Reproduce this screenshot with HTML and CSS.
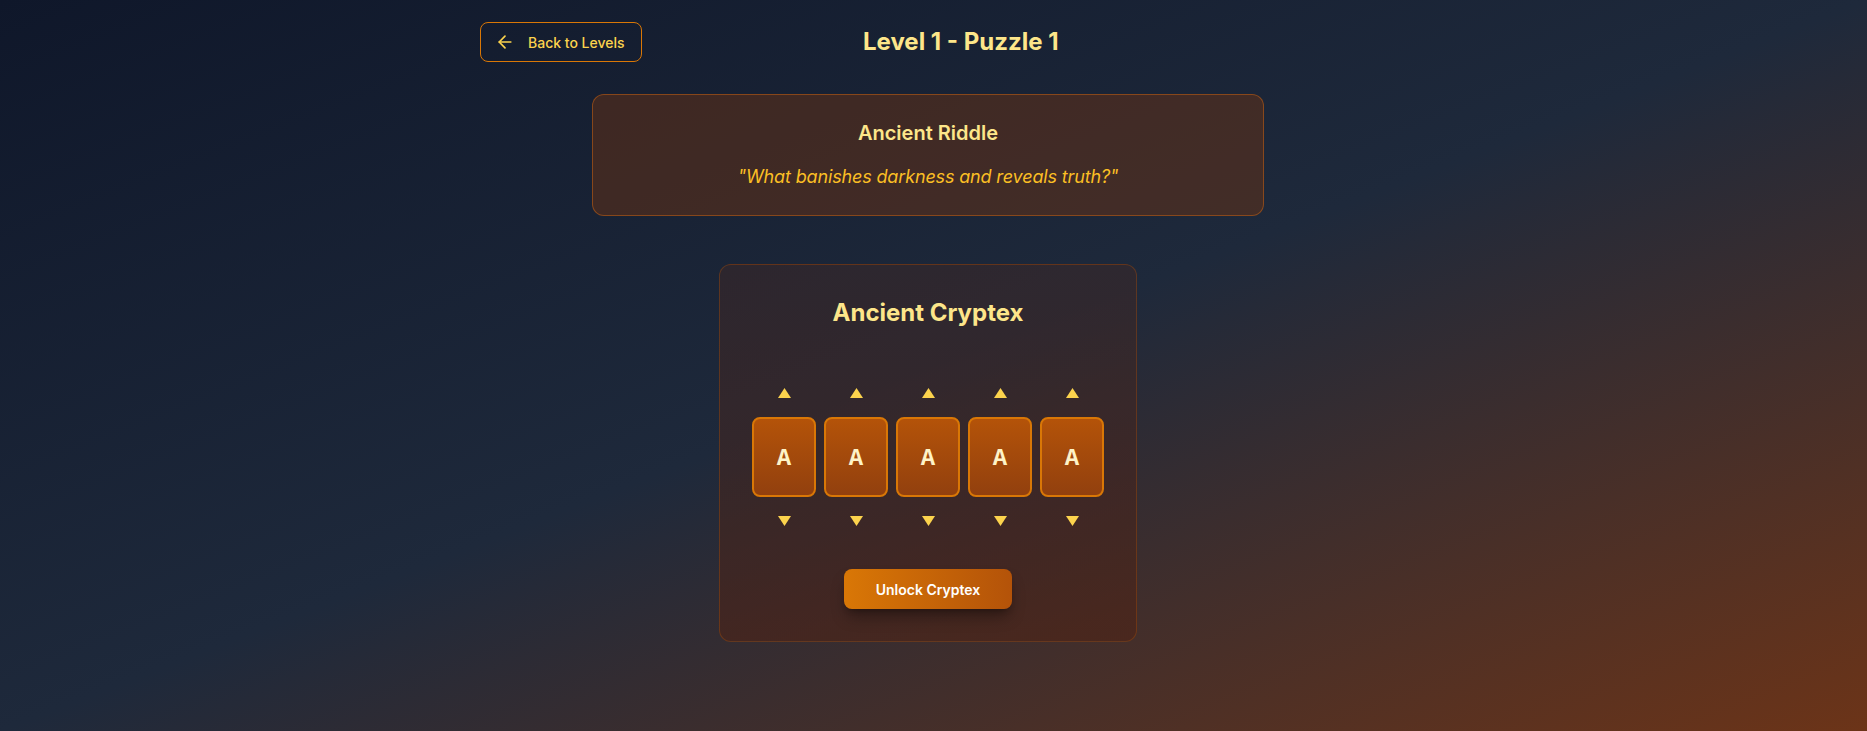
FILE: index.html
```html
<!DOCTYPE html>
<html lang="en">
<head>
<meta charset="utf-8">
<title>Level 1 - Puzzle 1</title>
<link rel="stylesheet" href="styles.css">
</head>
<body>
<div class="page">
  <header class="header">
    <button class="back-btn">
      <svg class="back-icon" viewBox="0 0 24 24" width="20" height="20" fill="none" stroke="currentColor" stroke-width="2" stroke-linecap="round" stroke-linejoin="round"><path d="m12 19-7-7 7-7"/><path d="M19 12H5"/></svg>
      <span>Back to Levels</span>
    </button>
    <h1 class="title">Level 1 - Puzzle 1</h1>
    <div class="spacer"></div>
  </header>

  <section class="riddle">
    <h2 class="riddle-title">Ancient Riddle</h2>
    <p class="riddle-text">"What banishes darkness and reveals truth?"</p>
  </section>

  <section class="cryptex">
    <h2 class="cryptex-title">Ancient Cryptex</h2>
    <div class="dials">
      <div class="dial">
        <button class="arrow"><svg viewBox="0 0 13 10" width="13" height="10"><polygon points="6.5,0 13,10 0,10"/></svg></button>
        <div class="letter">A</div>
        <button class="arrow"><svg viewBox="0 0 13 10" width="13" height="10"><polygon points="0,0 13,0 6.5,10"/></svg></button>
      </div>
      <div class="dial">
        <button class="arrow"><svg viewBox="0 0 13 10" width="13" height="10"><polygon points="6.5,0 13,10 0,10"/></svg></button>
        <div class="letter">A</div>
        <button class="arrow"><svg viewBox="0 0 13 10" width="13" height="10"><polygon points="0,0 13,0 6.5,10"/></svg></button>
      </div>
      <div class="dial">
        <button class="arrow"><svg viewBox="0 0 13 10" width="13" height="10"><polygon points="6.5,0 13,10 0,10"/></svg></button>
        <div class="letter">A</div>
        <button class="arrow"><svg viewBox="0 0 13 10" width="13" height="10"><polygon points="0,0 13,0 6.5,10"/></svg></button>
      </div>
      <div class="dial">
        <button class="arrow"><svg viewBox="0 0 13 10" width="13" height="10"><polygon points="6.5,0 13,10 0,10"/></svg></button>
        <div class="letter">A</div>
        <button class="arrow"><svg viewBox="0 0 13 10" width="13" height="10"><polygon points="0,0 13,0 6.5,10"/></svg></button>
      </div>
      <div class="dial">
        <button class="arrow"><svg viewBox="0 0 13 10" width="13" height="10"><polygon points="6.5,0 13,10 0,10"/></svg></button>
        <div class="letter">A</div>
        <button class="arrow"><svg viewBox="0 0 13 10" width="13" height="10"><polygon points="0,0 13,0 6.5,10"/></svg></button>
      </div>
    </div>
    <div class="unlock-row">
      <button class="unlock">Unlock Cryptex</button>
    </div>
  </section>
</div>
</body>
</html>
```

FILE: styles.css
```css
* { box-sizing: border-box; }

html, body {
  margin: 0;
  padding: 0;
  height: 100%;
}

body {
  font-family: Inter, "Noto Sans", sans-serif;
  background: linear-gradient(to bottom right, #0f172a 0%, #1e293b 50%, #6c3418 100%);
  background-attachment: fixed;
  min-height: 100vh;
  overflow: hidden;
}

.page {
  min-height: 100vh;
  padding: 22px 11px 0 0;
  display: flex;
  flex-direction: column;
  align-items: center;
}

.header {
  width: 896px;
  display: flex;
  align-items: center;
  justify-content: space-between;
}

.back-btn {
  display: flex;
  align-items: center;
  gap: 13px;
  height: 40px;
  padding: 0 16px 0 14px;
  background: transparent;
  border: 1px solid #d97706;
  border-radius: 8px;
  color: #fcd34d;
  font-family: Inter, sans-serif;
  font-size: 14px;
  font-weight: 500;
  cursor: pointer;
}

.back-icon { display: block; flex: none; }

.title {
  margin: 0;
  font-size: 24px;
  line-height: 32px;
  font-weight: 700;
  color: #fde68a;
}

.spacer { width: 96px; }

.riddle {
  width: 672px;
  margin-top: 32px;
  padding: 24px;
  border: 1px solid rgba(194, 96, 20, 0.55);
  border-radius: 12px;
  background: rgba(120, 53, 15, 0.42);
  text-align: center;
}

.riddle-title {
  margin: 0 0 16px;
  font-size: 20px;
  line-height: 28px;
  font-weight: 600;
  color: #fde68a;
}

.riddle-text {
  margin: 0;
  font-size: 18px;
  line-height: 28px;
  font-style: italic;
  letter-spacing: -0.15px;
  color: #fbbf24;
}

.cryptex {
  margin-top: 48px;
  padding: 32px;
  border: 1px solid rgba(180, 83, 9, 0.35);
  border-radius: 12px;
  background: linear-gradient(to bottom, rgba(60, 40, 40, 0.55), rgba(80, 35, 20, 0.55));
  text-align: center;
}

.cryptex-title {
  margin: 0 0 48px;
  font-size: 24px;
  line-height: 32px;
  font-weight: 700;
  color: #fde68a;
}

.dials {
  display: flex;
  gap: 8px;
}

.dial {
  display: flex;
  flex-direction: column;
  align-items: center;
  gap: 8px;
  width: 64px;
}

.arrow {
  height: 32px;
  width: 32px;
  padding: 0;
  border: none;
  background: transparent;
  display: flex;
  align-items: center;
  justify-content: center;
  cursor: pointer;
}

.arrow svg { display: block; fill: #fcd34d; }

.letter {
  width: 64px;
  height: 80px;
  padding-top: 3px;
  border: 2px solid #d97706;
  border-radius: 8px;
  background: linear-gradient(to bottom, #b45309, #92400e);
  display: flex;
  align-items: center;
  justify-content: center;
  font-family: "Liberation Mono", "DejaVu Sans Mono", monospace;
  font-size: 24px;
  font-weight: 700;
  color: #fef3c7;
}

.unlock-row {
  margin-top: 32px;
  display: flex;
  justify-content: center;
}

.unlock {
  height: 40px;
  padding: 0 32px;
  border: none;
  border-radius: 8px;
  background: linear-gradient(to right, #d97706, #b45309);
  color: #ffffff;
  font-family: Inter, sans-serif;
  font-size: 14px;
  font-weight: 600;
  box-shadow: 0 10px 15px -3px rgba(0, 0, 0, 0.35), 0 4px 6px -4px rgba(0, 0, 0, 0.35);
  cursor: pointer;
}
```
